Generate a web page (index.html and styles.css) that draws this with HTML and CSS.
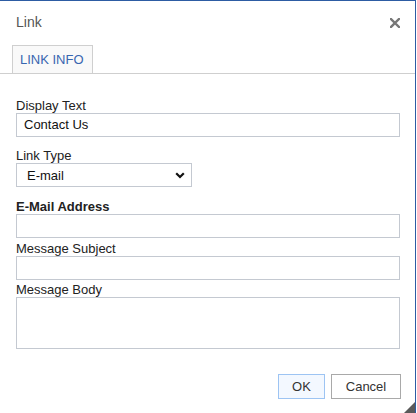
FILE: index.html
```html
<!DOCTYPE html>
<html>
<head>
<meta charset="utf-8">
<link rel="stylesheet" href="styles.css">
</head>
<body>
<div class="dialog">
  <div class="titlebar">
    <span class="title">Link</span>
    <svg class="close" width="10" height="10" viewBox="0 0 10 10"><path d="M1 1 L9 9 M9 1 L1 9" stroke="#777" stroke-width="2.4" stroke-linecap="square"/></svg>
  </div>
  <div class="tabs"><div class="tab">LINK INFO</div></div>
  <div class="content">
    <div class="field f-display">
      <div class="label">Display Text</div>
      <div class="input">Contact Us</div>
    </div>
    <div class="field f-type">
      <div class="label">Link Type</div>
      <div class="select"><span>E-mail</span><svg width="10" height="7" viewBox="0 0 10 7"><path d="M1.2 1.2 L5 5 L8.8 1.2" fill="none" stroke="#111" stroke-width="2.2"/></svg></div>
    </div>
    <div class="field f-email">
      <div class="label bold">E-Mail Address</div>
      <div class="input"></div>
    </div>
    <div class="field f-subject">
      <div class="label">Message Subject</div>
      <div class="input"></div>
    </div>
    <div class="field f-body">
      <div class="label">Message Body</div>
      <div class="textarea"></div>
    </div>
  </div>
  <div class="footer">
    <div class="btn ok">OK</div>
    <div class="btn cancel">Cancel</div>
  </div>
  <div class="grip"></div>
</div>
</body>
</html>
```
FILE: styles.css
```css
html, body { margin: 0; padding: 0; background: #fff; }
body { font-family: "Liberation Sans", Arial, sans-serif; font-size: 13px; color: #222; }
.dialog {
  position: relative;
  width: 416px;
  height: 413px;
  box-sizing: border-box;
  border-top: 1px solid #2d5ca3;
  border-right: 1px solid #2d5ca3;
  background: #fff;
}
.titlebar {
  height: 44px;
  box-sizing: border-box;
  padding: 13px 15px 0 16px;
  display: flex;
  justify-content: space-between;
  align-items: flex-start;
}
.title { font-size: 14px; line-height: 16px; color: #555; }
.close { margin-top: 4px; }
.tabs {
  border-bottom: 1px solid #cfcfcf;
  padding-left: 12px;
  display: flex;
}
.tab {
  width: 81px;
  height: 28px;
  box-sizing: border-box;
  border: 1px solid #cfcfcf;
  border-bottom: none;
  background: #f9f9f9;
  padding-left: 7px;
  line-height: 27px;
  color: #3866b0;
  font-size: 13px;
}
.content { padding: 24px 15px 0 16px; }
.field { display: flex; flex-direction: column; }
.label { line-height: 15px; color: #222; }
.bold { font-weight: bold; }
.input, .select, .textarea {
  box-sizing: border-box;
  border: 1px solid #c4c9d1;
  background: #fff;
}
.input { height: 24px; line-height: 21px; padding-left: 7px; color: #111; }
.select {
  width: 176px;
  height: 24px;
  line-height: 21px;
  padding: 0 6px 0 10px;
  display: flex;
  justify-content: space-between;
  align-items: center;
  color: #111;
}
.textarea { height: 52px; }
.f-type { margin-top: 11px; }
.f-email { margin-top: 12px; }
.f-subject { margin-top: 3px; }
.f-body { margin-top: 2px; }
.footer {
  margin-top: 25px;
  padding-right: 14px;
  display: flex;
  justify-content: flex-end;
  gap: 6px;
}
.btn {
  height: 25px;
  box-sizing: border-box;
  line-height: 23px;
  text-align: center;
  color: #333;
  font-size: 13px;
}
.ok { width: 47px; background: #f3f8ff; border: 1px solid #9dc4f3; }
.cancel { width: 70px; background: #fff; border: 1px solid #a9a9a9; }
.grip {
  position: absolute;
  right: 0;
  bottom: 0;
  width: 0;
  height: 0;
  border-left: 11px solid transparent;
  border-bottom: 11px solid #5a5a5a;
}
```
